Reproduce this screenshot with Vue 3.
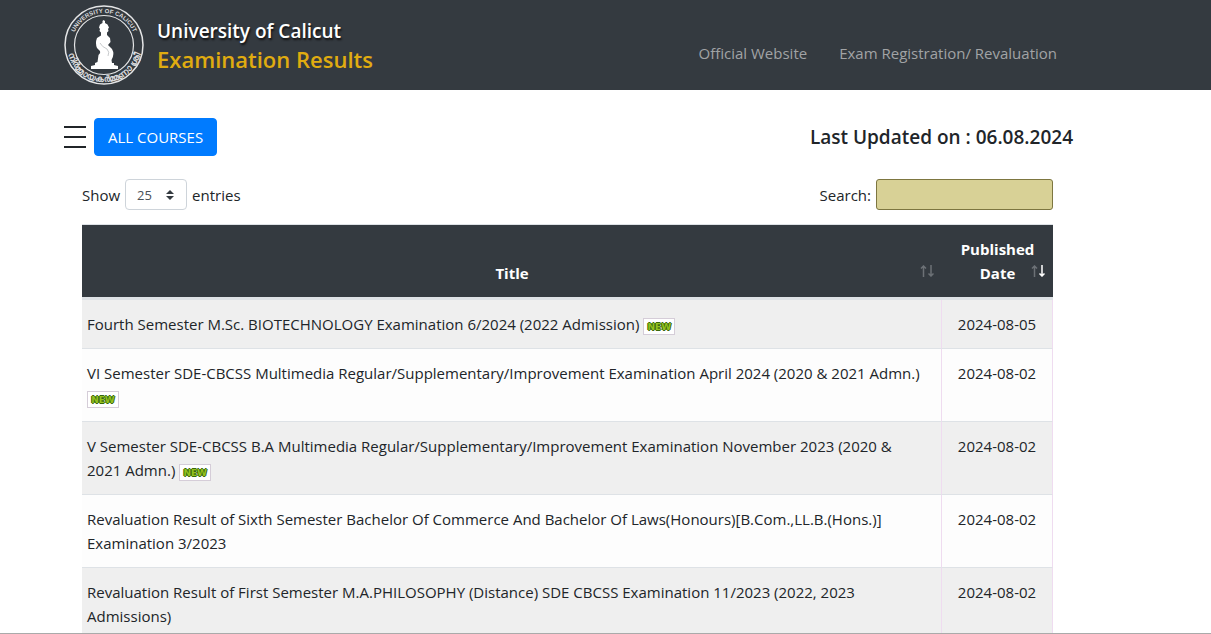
<script setup>
import { ref, computed } from "vue"

const links = ["Official Website", "Exam Registration/ Revaluation"]

const pageSize = ref("25")
const search = ref("")

const results = ref([
  { id: 1, title: "Fourth Semester M.Sc. BIOTECHNOLOGY Examination 6/2024 (2022 Admission)", date: "2024-08-05", isNew: true },
  { id: 2, title: "VI Semester SDE-CBCSS Multimedia Regular/Supplementary/Improvement Examination April 2024 (2020 & 2021 Admn.)", date: "2024-08-02", isNew: true },
  { id: 3, title: "V Semester SDE-CBCSS B.A Multimedia Regular/Supplementary/Improvement Examination November 2023 (2020 & 2021 Admn.)", date: "2024-08-02", isNew: true },
  { id: 4, title: "Revaluation Result of Sixth Semester Bachelor Of Commerce And Bachelor Of Laws(Honours)[B.Com.,LL.B.(Hons.)] Examination 3/2023", date: "2024-08-02", isNew: false },
  { id: 5, title: "Revaluation Result of First Semester M.A.PHILOSOPHY (Distance) SDE CBCSS Examination 11/2023 (2022, 2023 Admissions)", date: "2024-08-02", isNew: false }
])

const filtered = computed(() =>
  results.value
    .filter((r) => r.title.toLowerCase().includes(search.value.toLowerCase()))
    .slice(0, Number(pageSize.value))
)
</script>

<template>
  <div class="page">
    <header class="topbar">
      <a class="brand" href="#">
        <svg class="emblem" viewBox="0 0 80 80" aria-hidden="true">
          <defs>
            <path id="arc-top" d="M8 40 A32 32 0 0 1 72 40" />
            <path id="arc-bottom" d="M3 40 A37 37 0 0 0 77 40" />
          </defs>
          <circle cx="40" cy="40" r="39" fill="none" stroke="#e4e5e6" stroke-width="1.5" />
          <circle cx="40" cy="40" r="29.5" fill="none" stroke="#e4e5e6" stroke-width="1.2" />
          <text class="motto" text-anchor="middle"><textPath href="#arc-top" startOffset="50%">UNIVERSITY OF CALICUT</textPath></text>
          <text class="motto motto-ml" text-anchor="middle"><textPath href="#arc-bottom" startOffset="50%">നിർമ്മായകർമ്മണാ ശ്രീ</textPath></text>
          <path
            fill="#fff"
            d="M39.500 15 L41 16 L41 18 L43.500 19.500 L45 22.500 L44 24 L44.500 26 L43 27.500 L43 30 L46 33 L46.500 37 L44 40 L48 44 Q51 49 47.500 55 L48 58 L50 58 L50 60 L54 61 L54 64 L27 64 L27 61 L31 60 L31 58 L33.500 57 L34.500 50 Q37 48 36 46 L33 43 Q31 38 33 33 L37 30.500 L37 27.500 L35.500 26 L36 24 L35 22.500 L36 19.500 L38.500 18 L38.500 16Z"
          />
          <path d="M36 38 Q38 42 43 44 Q46 47 44 51" fill="none" stroke="#b9bcbf" stroke-width=".8" />
        </svg>
        <span class="brand-text">
          <span class="brand-name">University of Calicut</span>
          <span class="brand-sub">Examination Results</span>
        </span>
      </a>
      <nav class="nav">
        <a v-for="link in links" :key="link" href="#">{{ link }}</a>
      </nav>
    </header>

    <main>
      <div class="heading">
        <div class="courses">
          <button class="menu" type="button" aria-label="Menu">
            <svg viewBox="0 0 22 22" width="22" height="22">
              <path d="M0 1h22M0 11h22M0 21h22" stroke="#212529" stroke-width="2" />
            </svg>
          </button>
          <button class="btn" type="button">ALL COURSES</button>
        </div>
        <h5>Last Updated on : 06.08.2024</h5>
      </div>

      <div class="results">
        <div class="controls">
          <label class="length">
            Show
            <span class="select-wrap">
              <select v-model="pageSize">
                <option>10</option>
                <option>25</option>
                <option>50</option>
                <option>100</option>
              </select>
              <svg class="caret" viewBox="0 0 8 10" width="8" height="10">
                <path d="M4 0l4 4H0zM4 10l4-4H0z" fill="#343a40" />
              </svg>
            </span>
            entries
          </label>
          <label class="search">
            Search:
            <input v-model="search" type="search" />
          </label>
        </div>

        <table>
          <thead>
            <tr>
              <th>
                Title
                <svg class="sort" viewBox="0 0 14 12" width="14" height="12">
                  <path d="M3.500 12V1M1 3.500L3.500 1L6 3.500M11 0v11M8.500 8.500L11 11l2.500-2.500" />
                </svg>
              </th>
              <th class="col-date">
                Published Date
                <svg class="sort" viewBox="0 0 14 12" width="14" height="12">
                  <path d="M3.500 12V1M1 3.500L3.500 1L6 3.500" />
                  <path class="active" d="M11 0v11M8.500 8.500L11 11l2.500-2.500" />
                </svg>
              </th>
            </tr>
          </thead>
          <tbody>
            <tr v-for="row in filtered" :key="row.id">
              <td class="title">
                {{ row.title }}
                <span v-if="row.isNew" class="new">NEW</span>
              </td>
              <td class="date">{{ row.date }}</td>
            </tr>
          </tbody>
        </table>
      </div>
    </main>
  </div>
</template>

<style>
body {
  background: #fff;
}
</style>

<style scoped>
* {
  box-sizing: border-box;
}

.page {
  height: 100vh;
  overflow: hidden;
  border-bottom: 1px solid #aaa;
  font-family: "Open Sans", "Noto Sans", sans-serif;
  font-size: 15px;
  line-height: 24px;
  color: #212529;
}

/* --- header --- */
.topbar {
  display: flex;
  align-items: center;
  justify-content: space-between;
  height: 90px;
  padding: 0 154px 0 64px;
  background: #343a40;
}

.brand {
  display: flex;
  align-items: center;
  gap: 13px;
  text-decoration: none;
}

.emblem {
  width: 80px;
  height: 80px;
}

.motto {
  font-family: "Liberation Sans", sans-serif;
  font-size: 6px;
  font-weight: 700;
  fill: #dcdddf;
}

.motto-ml {
  font-size: 9px;
}

.brand-text {
  display: flex;
  flex-direction: column;
  line-height: 28px;
}

.brand-name {
  color: #fff;
  font-size: 19px;
  font-weight: 600;
  text-shadow: 1px 2px 2px #111;
}

.brand-sub {
  color: #e0ac10;
  font-size: 22px;
  font-weight: 600;
}

.nav {
  display: flex;
  gap: 32px;
  padding-top: 16px;
}

.nav a {
  color: #a1a3a5;
  text-decoration: none;
}

/* --- heading --- */
.heading {
  display: flex;
  align-items: center;
  justify-content: space-between;
  padding: 28px 138px 0 64px;
}

.courses {
  display: flex;
  align-items: center;
  gap: 8px;
}

.menu {
  display: flex;
  padding: 0;
  border: 0;
  background: none;
}

.btn {
  height: 38px;
  padding: 0 13px;
  border: 1px solid #007bff;
  border-radius: 4px;
  background: #007bff;
  color: #fff;
  font: inherit;
}

h5 {
  margin: 0;
  font-size: 19px;
  font-weight: 600;
}

/* --- table controls --- */
.results {
  padding: 23px 158px 0 82px;
}

.controls {
  display: flex;
  justify-content: space-between;
  margin-bottom: 14px;
}

.length,
.search {
  display: flex;
  align-items: center;
  gap: 5px;
}

.select-wrap {
  position: relative;
}

select {
  display: block;
  width: 62px;
  height: 31px;
  padding: 0 11px;
  appearance: none;
  border: 1px solid #ced4da;
  border-radius: 4px;
  background: #fff;
  color: #495057;
  font: inherit;
  font-size: 13px;
}

.caret {
  position: absolute;
  right: 13px;
  top: 11px;
  pointer-events: none;
}

input {
  width: 177px;
  height: 31px;
  padding: 0 8px;
  border: 1px solid #7d7640;
  border-radius: 3px;
  background: #d8d196;
  font: inherit;
}

/* --- table --- */
table {
  width: 100%;
  border-collapse: separate;
  border-spacing: 0;
  border-top: 1px solid #dee2e6;
}

th {
  position: relative;
  padding: 12px 16px;
  border-bottom: 3px solid #dee2e6;
  background: #343a40;
  background-clip: padding-box;
  color: #fff;
  font-weight: 700;
  vertical-align: bottom;
}

.col-date {
  width: 111px;
}

.sort {
  position: absolute;
  right: 8px;
  bottom: 20px;
  fill: none;
  stroke: #6c7176;
  stroke-width: 1.5;
}

.sort .active {
  stroke: #fff;
}

td {
  padding: 12px 5px;
  border-right: 1px solid #efdcf0;
  border-bottom: 1px solid #dee2e6;
  vertical-align: top;
}

tbody tr:nth-child(odd) {
  background: #efefef;
}

tbody tr:nth-child(even) {
  background: #fdfdfd;
}

.title {
  padding-right: 16px;
}

.date {
  text-align: center;
}

.new {
  display: inline-block;
  width: 32px;
  height: 17px;
  border: 1px solid #d5cdd8;
  background: #fff;
  color: #94c11f;
  font-family: "DejaVu Sans", sans-serif;
  font-size: 9px;
  font-weight: 700;
  line-height: 16px;
  text-align: center;
  text-shadow: 1px 0 #37680c, -1px 0 #37680c, 0 1px #37680c, 0 -1px #37680c;
}
</style>
